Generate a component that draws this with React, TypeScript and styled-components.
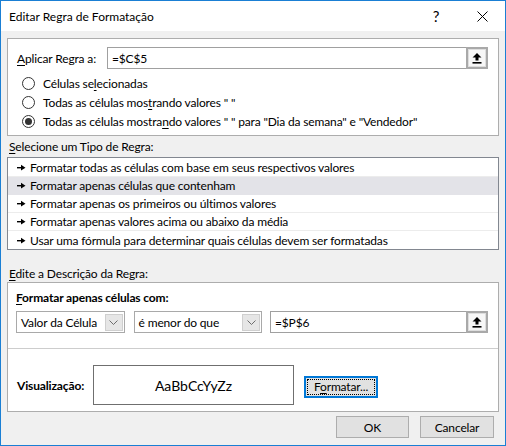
import * as React from 'react';
import styled, { createGlobalStyle } from 'styled-components';

const GlobalStyle = createGlobalStyle`
	html, body {
		margin: 0;
		padding: 0;
		background: #ffffff;
	}
	body {
		font-family: Lato, "Noto Sans", "Liberation Sans", sans-serif;
		font-size: 12px;
		color: #000;
	}
	* {
		box-sizing: border-box;
	}
`;

const Window = styled.div`
	width: 506px;
	height: 446px;
	border: 1px solid #1a7fd4;
	background: #f0f0f0;
	display: flex;
	flex-direction: column;
	white-space: nowrap;
`;

const TitleBar = styled.div`
	height: 30px;
	background: #ffffff;
	display: flex;
	align-items: center;
	padding-left: 8px;
	font-size: 12px;
`;

const TitleText = styled.div`
	flex: 1;
`;

const TitleButton = styled.div`
	width: 46px;
	height: 30px;
	display: flex;
	align-items: center;
	justify-content: center;
	font-size: 15px;
`;

const Body = styled.div`
	flex: 1;
	padding: 7px 6px 0;
	display: flex;
	flex-direction: column;
	letter-spacing: -0.15px;
`;

const GroupBox = styled.div`
	background: #ffffff;
	border: 1px solid #adadad;
`;

const TopBox = styled(GroupBox)`
	padding: 8px 10px 4px 9px;
`;

const FieldRow = styled.div`
	display: flex;
	align-items: center;
	height: 22px;
`;

const FieldLabel = styled.div<{ $width: number; $bold?: boolean }>`
	width: ${p => p.$width}px;
	font-weight: ${p => (p.$bold ? 700 : 400)};
	flex-shrink: 0;
`;

const RefInput = styled.div<{ $width?: number }>`
	flex: ${p => (p.$width ? 'none' : '1')};
	width: ${p => (p.$width ? `${p.$width}px` : 'auto')};
	height: 22px;
	border: 1px solid #a0a0a0;
	background: #fff;
	display: flex;
	align-items: center;
	padding-left: 4px;
`;

const RefText = styled.div`
	flex: 1;
`;

const CollapseButton = styled.div`
	width: 22px;
	height: 22px;
	margin: -1px -1px -1px 0;
	border: 2px solid #a9a9a9;
	background: #f7f7f7;
	box-shadow: inset 0 0 0 1px #dedede;
	display: flex;
	align-items: center;
	justify-content: center;
`;

const RadioList = styled.div`
	margin-top: 5px;
	padding-left: 5px;
	display: flex;
	flex-direction: column;
`;

const RadioRow = styled.div`
	height: 19px;
	display: flex;
	align-items: center;
	gap: 8px;
`;

const RadioCircle = styled.div<{ $checked?: boolean }>`
	width: 13px;
	height: 13px;
	border-radius: 50%;
	border: 1px solid #333333;
	background: #fff;
	display: flex;
	align-items: center;
	justify-content: center;

	&::after {
		content: '';
		display: ${p => (p.$checked ? 'block' : 'none')};
		width: 7px;
		height: 7px;
		border-radius: 50%;
		background: #333333;
	}
`;

const SectionLabel = styled.div<{ $top: number }>`
	margin-top: ${p => p.$top}px;
	height: 16px;
	line-height: 16px;
	padding-left: 2px;
`;

const RuleList = styled.div`
	margin-top: 2px;
	height: 93px;
	background: #fff;
	border: 1px solid #828790;
	padding-top: 1px;
`;

const RuleRow = styled.div<{ $selected?: boolean }>`
	height: 18px;
	display: flex;
	align-items: center;
	gap: 3px;
	padding-left: 9px;
	background: ${p => (p.$selected ? '#e3e3e8' : '#fff')};
	border-bottom: 1px solid ${p => (p.$selected ? '#e3e3e8' : '#ececec')};

	&:last-child {
		border-bottom: none;
	}
`;

const LowerBox = styled(GroupBox)`
	padding-top: 7px;
	height: 130px;
	display: flex;
	flex-direction: column;
`;

const LowerSection = styled.div`
	padding: 0 10px 0 8px;
`;

const BoldLabel = styled.div`
	font-weight: 700;
	height: 16px;
	line-height: 16px;
`;

const CriteriaRow = styled.div`
	margin-top: 5px;
	display: flex;
	align-items: center;
`;

const Dropdown = styled.div<{ $width: number; $gap: number }>`
	width: ${p => p.$width}px;
	margin-right: ${p => p.$gap}px;
	height: 22px;
	border: 1px solid #a9a9a9;
	background: #fff;
	display: flex;
	align-items: center;
	padding: 2px 1px 2px 4px;
`;

const DropdownText = styled.div`
	flex: 1;
`;

const DropdownArrow = styled.div`
	width: 18px;
	height: 17px;
	background: #e6e6e6;
	border: 1px solid #cfcfcf;
	display: flex;
	align-items: center;
	justify-content: center;
`;

const Divider = styled.div`
	margin-top: 15px;
	height: 1px;
	background: #cdcdcd;
`;

const PreviewRow = styled.div`
	margin-top: 16px;
	display: flex;
	align-items: center;
	padding-left: 9px;
`;

const PreviewBox = styled.div`
	width: 201px;
	height: 40px;
	border: 1px solid #6f6f6f;
	display: flex;
	align-items: center;
	justify-content: center;
	font-size: 14px;
	letter-spacing: 0;
`;

const Button = styled.div<{ $width: number; $focused?: boolean }>`
	width: ${p => p.$width}px;
	height: 22px;
	background: #e1e1e1;
	border: ${p => (p.$focused ? '2px solid #0078d7' : '1px solid #adadad')};
	display: flex;
	align-items: center;
	justify-content: center;
	position: relative;

	${p =>
		p.$focused &&
		`
		&::after {
			content: '';
			position: absolute;
			inset: 1px;
			border: 1px dotted #000;
		}
	`}
`;

const FormatButton = styled(Button)`
	margin-left: 10px;
	margin-top: 3px;
`;

const Footer = styled.div`
	margin-top: 4px;
	padding-right: 5px;
	display: flex;
	justify-content: flex-end;
	gap: 11px;
`;

const Key = styled.span`
	text-decoration: underline;
	text-underline-offset: 2px;
`;

const RuleArrow = () => (
	<svg width="10" height="7" viewBox="0 0 10 7">
		<rect x="0" y="3" width="5" height="1.4" fill="#000" />
		<polygon points="4,0.8 8.5,3.7 4,6.4" fill="#000" />
	</svg>
);

const UploadIcon = () => (
	<svg width="10" height="11" viewBox="0 0 10 11">
		<polygon points="5,0 9.5,4.5 6.5,4.5 6.5,7.5 3.5,7.5 3.5,4.5 0.5,4.5" fill="#000" />
		<rect x="0.5" y="9" width="9" height="1.6" fill="#000" />
	</svg>
);

const Chevron = () => (
	<svg width="9" height="5" viewBox="0 0 9 5">
		<polyline points="0.5,0.5 4.5,4.5 8.5,0.5" fill="none" stroke="#6d6d6d" strokeWidth="1" />
	</svg>
);

const CloseIcon = () => (
	<svg width="11" height="11" viewBox="0 0 11 11">
		<line x1="0.5" y1="0.5" x2="10.5" y2="10.5" stroke="#000" strokeWidth="1" />
		<line x1="10.5" y1="0.5" x2="0.5" y2="10.5" stroke="#000" strokeWidth="1" />
	</svg>
);

const rules = [
	'Formatar todas as células com base em seus respectivos valores',
	'Formatar apenas células que contenham',
	'Formatar apenas os primeiros ou últimos valores',
	'Formatar apenas valores acima ou abaixo da média',
	'Usar uma fórmula para determinar quais células devem ser formatadas',
];

const App = () => (
	<>
		<GlobalStyle />
		<Window>
			<TitleBar>
				<TitleText>Editar Regra de Formatação</TitleText>
				<TitleButton>?</TitleButton>
				<TitleButton>
					<CloseIcon />
				</TitleButton>
			</TitleBar>
			<Body>
				<TopBox>
					<FieldRow>
						<FieldLabel $width={90}>
							<Key>A</Key>plicar Regra a:
						</FieldLabel>
						<RefInput>
							<RefText>=$C$5</RefText>
							<CollapseButton>
								<UploadIcon />
							</CollapseButton>
						</RefInput>
					</FieldRow>
					<RadioList>
						<RadioRow>
							<RadioCircle />
							<span>
								Células se<Key>l</Key>ecionadas
							</span>
						</RadioRow>
						<RadioRow>
							<RadioCircle />
							<span>
								Todas as células mos<Key>t</Key>rando valores " "
							</span>
						</RadioRow>
						<RadioRow>
							<RadioCircle $checked />
							<span>
								Todas as células mostra<Key>n</Key>do valores " " para "Dia da semana" e "Vendedor"
							</span>
						</RadioRow>
					</RadioList>
				</TopBox>

				<SectionLabel $top={3}>
					<Key>S</Key>elecione um Tipo de Regra:
				</SectionLabel>
				<RuleList>
					{rules.map((r, i) => (
						<RuleRow key={r} $selected={i === 1}>
							<RuleArrow />
							<span>{r}</span>
						</RuleRow>
					))}
				</RuleList>

				<SectionLabel $top={16}>
					<Key>E</Key>dite a Descrição da Regra:
				</SectionLabel>
				<LowerBox>
					<LowerSection>
						<BoldLabel>
							<Key>F</Key>ormatar apenas células com:
						</BoldLabel>
						<CriteriaRow>
							<Dropdown $width={109} $gap={9}>
								<DropdownText>Valor da Célula</DropdownText>
								<DropdownArrow>
									<Chevron />
								</DropdownArrow>
							</Dropdown>
							<Dropdown $width={129} $gap={8}>
								<DropdownText>é menor do que</DropdownText>
								<DropdownArrow>
									<Chevron />
								</DropdownArrow>
							</Dropdown>
							<RefInput $width={218}>
								<RefText>=$P$6</RefText>
								<CollapseButton>
									<UploadIcon />
								</CollapseButton>
							</RefInput>
						</CriteriaRow>
					</LowerSection>
					<Divider />
					<PreviewRow>
						<FieldLabel $width={76} $bold>
							Visualização:
						</FieldLabel>
						<PreviewBox>AaBbCcYyZz</PreviewBox>
						<FormatButton $width={74} $focused>
							<span>
								F<Key>o</Key>rmatar...
							</span>
						</FormatButton>
					</PreviewRow>
				</LowerBox>

				<Footer>
					<Button $width={73}>OK</Button>
					<Button $width={74}>Cancelar</Button>
				</Footer>
			</Body>
		</Window>
	</>
);

export default App;
